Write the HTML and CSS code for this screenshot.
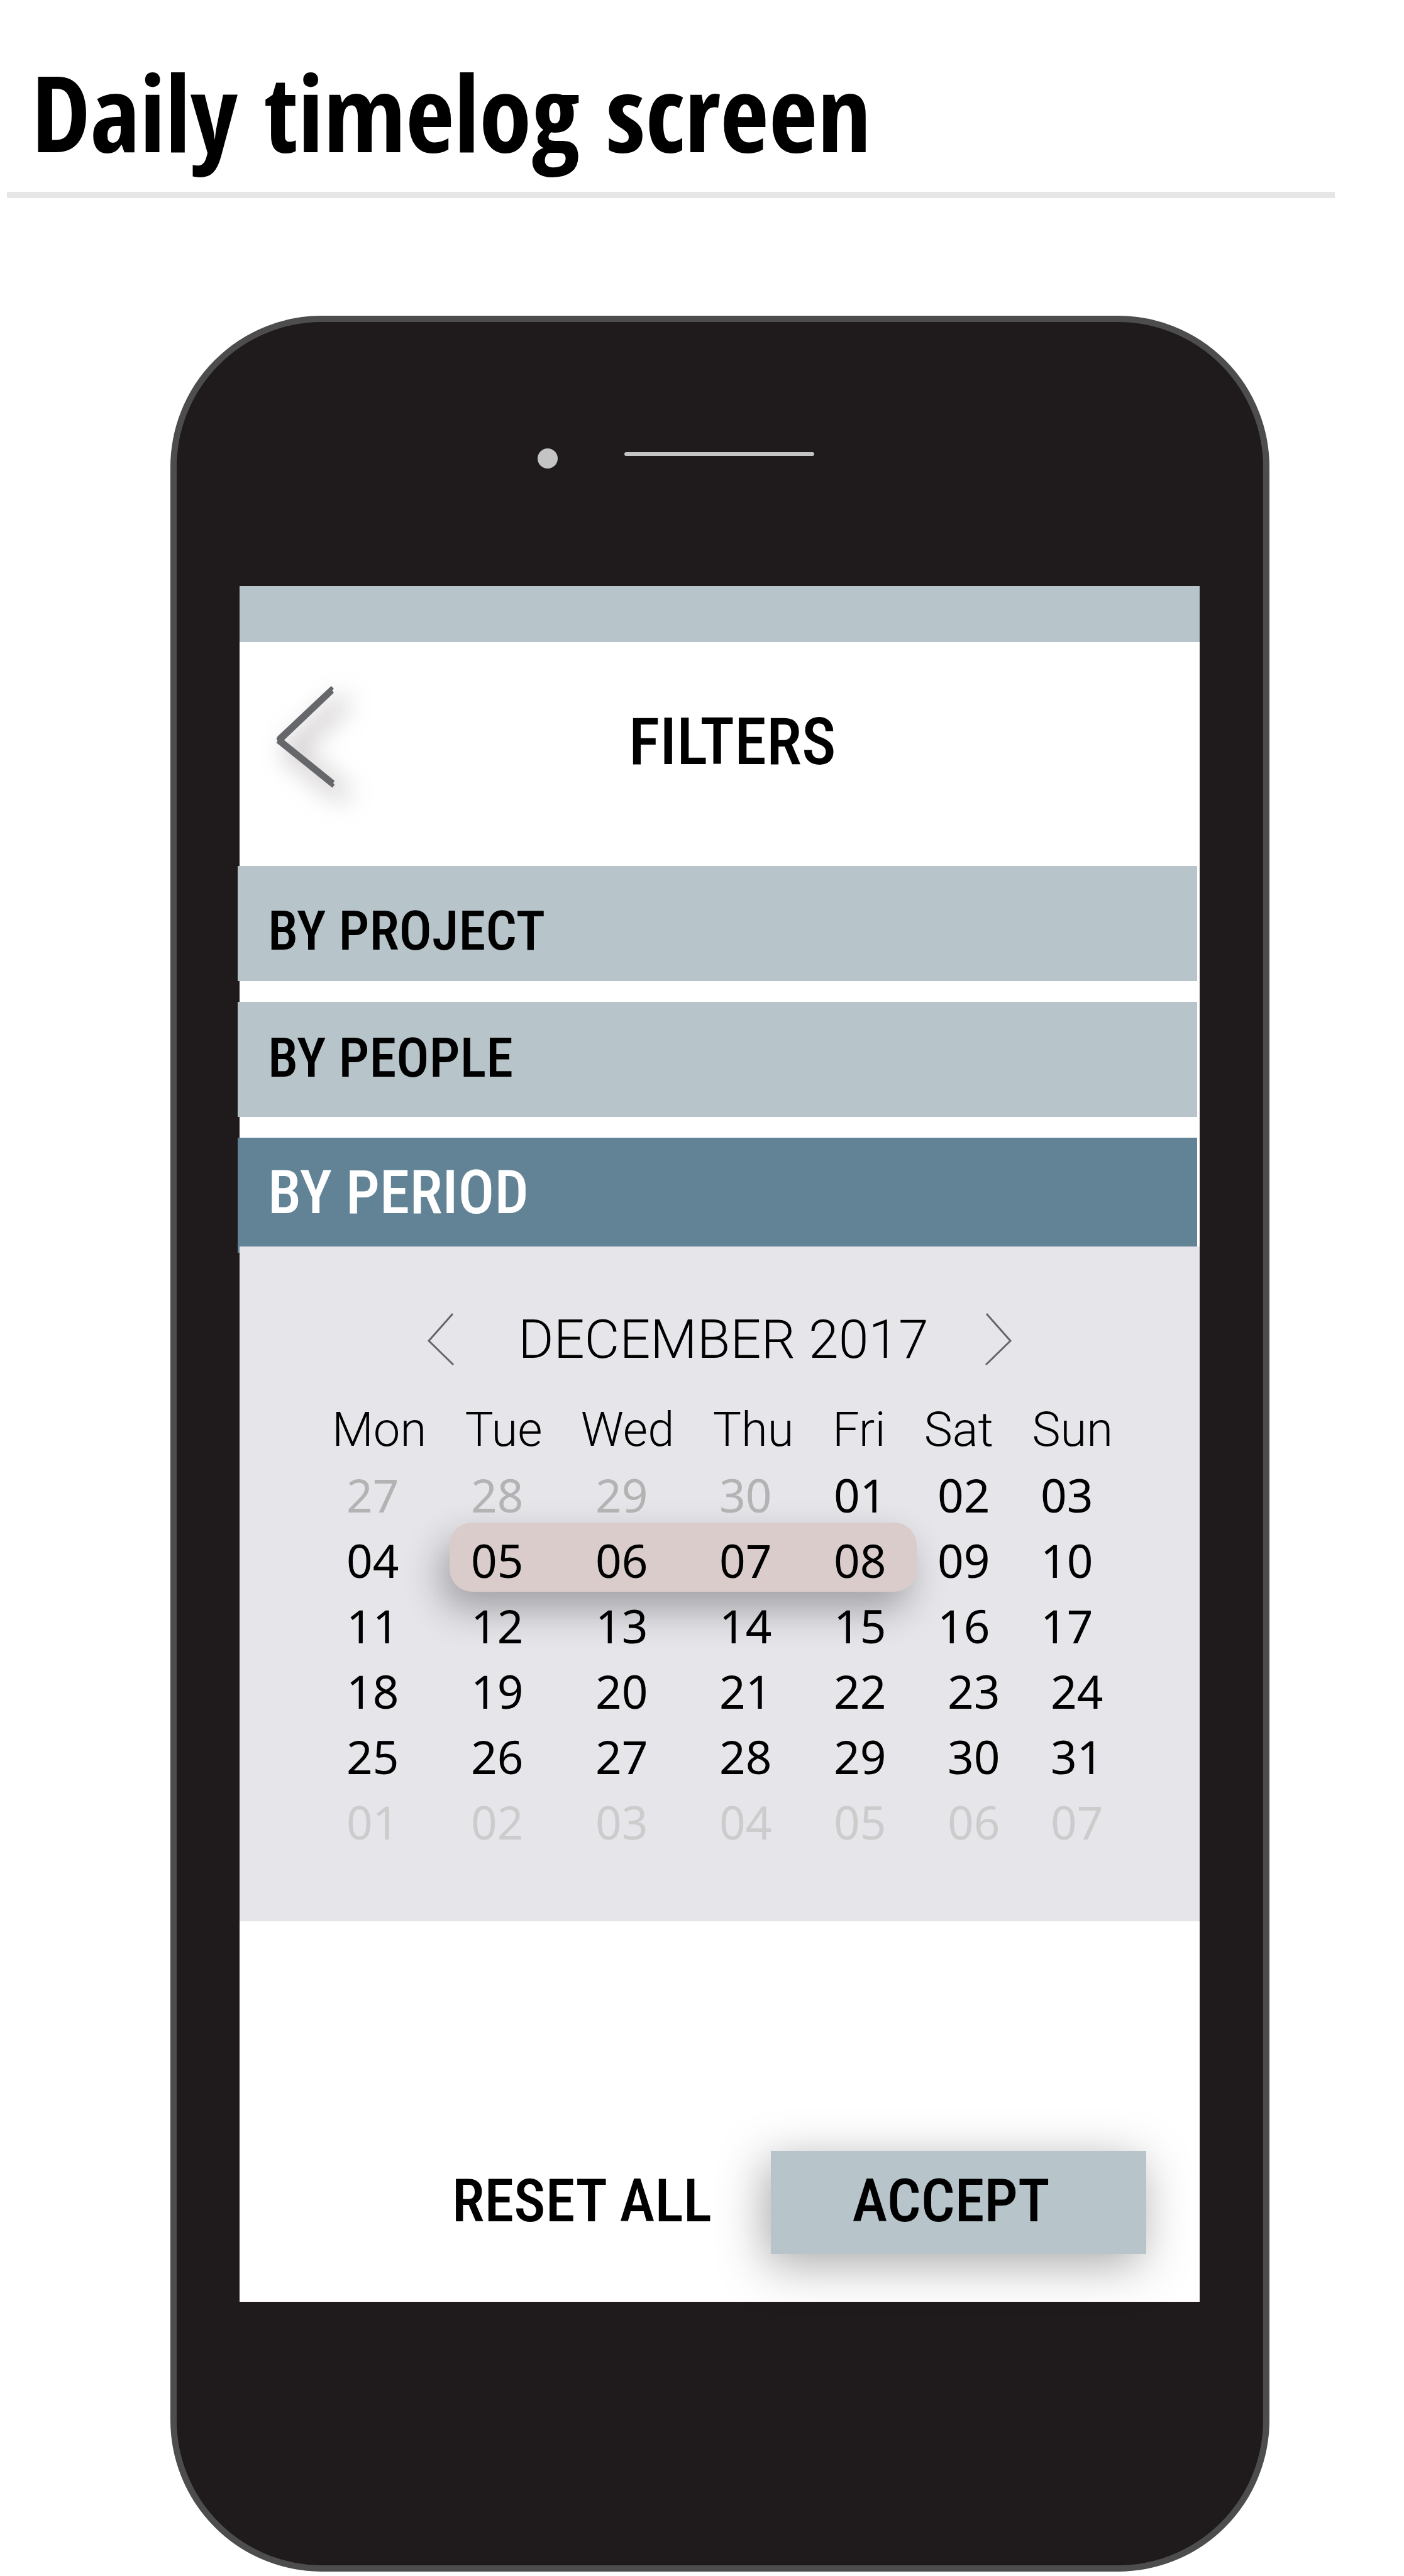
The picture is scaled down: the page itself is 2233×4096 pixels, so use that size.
FILE: index.html
```html
<!DOCTYPE html>
<html lang="en">
<head>
<meta charset="utf-8">
<meta name="viewport" content="width=device-width, initial-scale=1">
<title>Daily timelog screen</title>
<link rel="stylesheet" href="styles.css">
</head>
<body>
<header class="page-header">
  <h1 class="page-title">Daily timelog screen</h1>
</header>

<main class="phone">
  <div class="phone-top">
    <span class="camera"></span>
    <span class="speaker"></span>
  </div>

  <div class="screen">
    <div class="status-bar"></div>

    <header class="app-bar">
      <button class="icon-button back" type="button" aria-label="Back">
        <svg class="back-icon" viewBox="0 0 96 168" fill="#66676a">
          <path d="M88.7 2.7 L93 6.9 L90.5 10.1 L93 13.4 L13.9 88.7 L94.2 153.6 L92 157.1 L94.2 160.1 L90.5 164.6 L1.6 93 L3.4 90.2 L1.6 86.7 L3.6 82.8 Z"/>
        </svg>
      </button>
      <h2 class="app-title">FILTERS</h2>
    </header>

    <nav class="filters" aria-label="Filters">
      <button class="filter filter-project" type="button">BY PROJECT</button>
      <button class="filter" type="button">BY PEOPLE</button>
      <button class="filter filter-active" type="button" aria-expanded="true">BY PERIOD</button>
    </nav>

    <section class="calendar" aria-label="Period">
      <div class="month">
        <button class="icon-button" type="button" aria-label="Previous month">
          <svg class="month-icon" viewBox="0 0 44 84" fill="none" stroke="#666" stroke-width="3">
            <path d="M41 1 L3 44 L42 82"/>
          </svg>
        </button>
        <h3 class="month-name">DECEMBER 2017</h3>
        <button class="icon-button" type="button" aria-label="Next month">
          <svg class="month-icon" viewBox="0 0 44 84" fill="none" stroke="#666" stroke-width="3">
            <path d="M3 1 L41 44 L2 82"/>
          </svg>
        </button>
      </div>

      <table class="days">
        <thead>
          <tr class="weekdays"><th>Mon</th><th>Tue</th><th>Wed</th><th>Thu</th><th>Fri</th><th>Sat</th><th>Sun</th></tr>
        </thead>
        <tbody>
          <tr class="week"><td class="previous">27</td><td class="previous">28</td><td class="previous">29</td><td class="previous">30</td><td>01</td><td>02</td><td>03</td></tr>
          <tr class="week selected"><td>04</td><td>05</td><td>06</td><td>07</td><td>08</td><td>09</td><td>10</td></tr>
          <tr class="week"><td>11</td><td>12</td><td>13</td><td>14</td><td>15</td><td>16</td><td>17</td></tr>
          <tr class="week week-wide"><td>18</td><td>19</td><td>20</td><td>21</td><td>22</td><td>23</td><td>24</td></tr>
          <tr class="week week-wide"><td>25</td><td>26</td><td>27</td><td>28</td><td>29</td><td>30</td><td>31</td></tr>
          <tr class="week week-wide next"><td>01</td><td>02</td><td>03</td><td>04</td><td>05</td><td>06</td><td>07</td></tr>
        </tbody>
      </table>
    </section>

    <footer class="actions">
      <button class="action" type="button">RESET ALL</button>
      <button class="action action-primary" type="button">ACCEPT</button>
    </footer>
  </div>
</main>
</body>
</html>
```
FILE: styles.css
```css
:root {
  --bar: #b7c4ca;
  --bar-active: #628395;
  --panel: #e6e5ea;
  --condensed: "Roboto Condensed", "Liberation Sans", sans-serif;
}

* {
  box-sizing: border-box;
}

body {
  margin: 0;
  padding-bottom: 7px;
  background: #fff;
  color: #000;
  font-family: Roboto, "Liberation Sans", sans-serif;
}

h1,
h2,
h3 {
  margin: 0;
}

button {
  padding: 0;
  border: 0;
  background: none;
  color: inherit;
  cursor: pointer;
}

/* Page heading */
.page-header {
  margin: 0 110px 187px 11px;
  padding: 77px 39px 28px;
  border-bottom: 10px solid #e6e6e6;
}

.page-title {
  font: 600 168px/200px "Open Sans Condensed", "Liberation Sans", sans-serif;
}

/* Device */
.phone {
  width: 78.28%;
  margin-left: 12.14%;
  padding: 0 101px 419px 100px;
  border: 10px solid #4d4d4d;
  border-radius: 241px;
  background: #1f1a1b;
}

.phone-top {
  display: flex;
  align-items: center;
  justify-content: center;
  gap: 106px;
  height: 420px;
  padding-right: 139px;
}

.camera {
  width: 32px;
  height: 32px;
  margin-top: 14px;
  border-radius: 50%;
  background: #c4c4c4;
}

.speaker {
  width: 302px;
  height: 6px;
  border-radius: 3px;
  background: #c4c4c4;
}

.screen {
  background: #fff;
}

.status-bar {
  height: 89px;
  background: var(--bar);
}

/* App bar */
.app-bar {
  display: grid;
  grid-template-columns: 619fr 908fr;
  align-items: center;
  height: 356px;
  padding-bottom: 38px;
}

.icon-button {
  display: block;
}

.back {
  justify-self: start;
  margin: 0 0 16px 57px;
}

.back-icon {
  display: block;
  width: 96px;
  height: 168px;
  overflow: visible;
  filter: drop-shadow(18px 18px 20px rgba(30, 10, 20, 0.5));
}

.app-title {
  font: 500 103px/120px var(--condensed);
}

/* Filter sections */
.filters {
  display: flex;
  flex-direction: column;
  gap: 33px;
  margin: 0 4px -10px -3px;
}

.filter {
  height: 183px;
  padding: 0 0 5px 48px;
  background: var(--bar);
  font: 500 87px/100px var(--condensed);
  text-align: left;
}

.filter-project {
  padding: 22px 0 0 48px;
}

.filter-active {
  padding-bottom: 10px;
  background: var(--bar-active);
  color: #fff;
  font-size: 96px;
}

/* Calendar */
.calendar {
  position: relative;
  padding: 104px 0 106px;
  background: var(--panel);
}

.month {
  display: flex;
  align-items: center;
  justify-content: center;
  gap: 89px;
  margin-bottom: 48px;
}

.month-icon {
  display: block;
  width: 44px;
  height: 84px;
}

.month-name {
  padding-left: 12px;
  font-weight: 300;
  font-size: 86px;
  line-height: 88px;
}

.days,
.days thead,
.days tbody {
  display: block;
}

.days {
  position: relative;
  z-index: 0;
}

.days th,
.days td {
  padding: 0;
}

.weekdays {
  display: flex;
  justify-content: space-between;
  padding: 0 138px 0 147px;
  font-size: 76px;
  line-height: 103px;
}

.weekdays th {
  font-weight: 300;
}

.week {
  display: grid;
  grid-template-columns: 198fr 198fr 197fr 182fr 165fr 164fr 253fr;
  position: relative;
  margin-left: 170px;
  font: 400 73px/104px "Noto Sans", sans-serif;
}

.week-wide {
  grid-template-columns: 198fr 198fr 197fr 182fr 181fr 164fr 237fr;
}

.previous {
  color: #b3b3b3;
}

.next {
  color: #ccc;
}

/* Range marker behind 05 to 08 */
.selected::before {
  content: "";
  position: absolute;
  z-index: -1;
  top: -8px;
  bottom: 2px;
  left: 12.1%;
  width: 54.7%;
  border-radius: 36px;
  background: #d9cccb;
  box-shadow: -12px 28px 60px rgba(0, 0, 0, 0.3);
}

/* Bottom actions */
.actions {
  display: flex;
  align-items: flex-end;
  justify-content: flex-end;
  gap: 94px;
  height: 605px;
  padding: 0 85px 76px 0;
}

.action {
  height: 164px;
  padding-bottom: 4px;
  font: 500 95px/120px var(--condensed);
}

.action-primary {
  width: 41.4%;
  padding-right: 24px;
  background: var(--bar);
  box-shadow: -8px 16px 76px rgba(0, 0, 0, 0.34);
}
```
